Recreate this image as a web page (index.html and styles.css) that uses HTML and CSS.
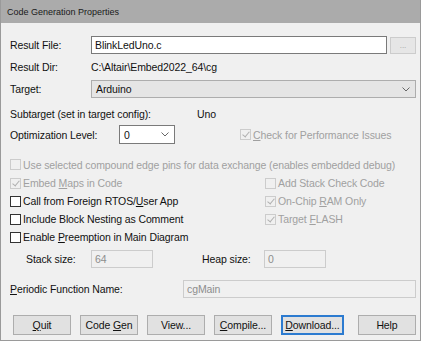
FILE: index.html
```html
<!DOCTYPE html>
<html lang="en">

<head>
    <meta charset="UTF-8">
    <title>Code Generation Properties</title>
    <link rel="stylesheet" href="styles.css">
</head>

<body>

    <div class="window">
        <div class="titlebar">Code Generation Properties</div>

        <div class="content">

            <div class="row r-file">
                <span class="label">Result File:</span>
                <div class="input file-input">BlinkLedUno.c</div>
                <div class="browse">...</div>
            </div>

            <div class="row r-dir">
                <span class="label">Result Dir:</span>
                <span>C:\Altair\Embed2022_64\cg</span>
            </div>

            <div class="row r-target">
                <span class="label">Target:</span>
                <div class="select target-select">
                    <span>Arduino</span>
                    <svg class="chev" width="8" height="5" viewBox="0 0 8 5"><path d="M0.5 0.5 L4 4 L7.5 0.5" fill="none" stroke="#666" stroke-width="1"/></svg>
                </div>
            </div>

            <div class="row r-sub">
                <span class="sub-label">Subtarget (set in target config):</span>
                <span>Uno</span>
            </div>

            <div class="row r-opt">
                <span class="opt-label">Optimization Level:</span>
                <div class="select opt-select">
                    <span>0</span>
                    <svg class="chev" width="8" height="5" viewBox="0 0 8 5"><path d="M0.5 0.5 L4 4 L7.5 0.5" fill="none" stroke="#666" stroke-width="1"/></svg>
                </div>
                <div class="check disabled perf">
                    <span class="box checked"></span><span><u>C</u>heck for Performance Issues</span>
                </div>
            </div>

            <div class="row r-first check disabled">
                <span class="box"></span><span>Use selected compound edge pins for data exchange (enables embedded debug)</span>
            </div>

            <div class="row pair">
                <div class="check disabled left"><span class="box checked"></span><span>Embed <u>M</u>aps in Code</span></div>
                <div class="check disabled"><span class="box"></span><span>Add Stack Check Code</span></div>
            </div>

            <div class="row pair">
                <div class="check left"><span class="box"></span><span>Call from Foreign RTOS/<u>U</u>ser App</span></div>
                <div class="check disabled"><span class="box checked"></span><span>On-Chip <u>R</u>AM Only</span></div>
            </div>

            <div class="row pair">
                <div class="check left"><span class="box"></span><span>Include Block Nesting as Comment</span></div>
                <div class="check disabled"><span class="box checked"></span><span>Target <u>F</u>LASH</span></div>
            </div>

            <div class="row pair">
                <div class="check left"><span class="box"></span><span>Enable <u>P</u>reemption in Main Diagram</span></div>
            </div>

            <div class="row r-stack">
                <span class="stack-label">Stack size:</span>
                <div class="input dis stack-input">64</div>
                <span class="heap-label">Heap size:</span>
                <div class="input dis stack-input">0</div>
            </div>

            <div class="row r-periodic">
                <span class="periodic-label"><u>P</u>eriodic Function Name:</span>
                <div class="input dis periodic-input">cgMain</div>
            </div>

            <div class="buttons">
                <div class="btn"><u>Q</u>uit</div>
                <div class="btn">Code <u>G</u>en</div>
                <div class="btn">View...</div>
                <div class="btn"><u>C</u>ompile...</div>
                <div class="btn focus"><u>D</u>ownload...</div>
                <div class="btn help">Help</div>
            </div>

        </div>
    </div>

</body>

</html>
```

FILE: styles.css
```css
body {
    margin: 0;
    padding: 0;
    background-color: #ffffff;
    font-family: 'Liberation Sans', Arial, sans-serif;
    font-size: 10.5px;
    letter-spacing: -0.1px;
    color: #111;
}

.window {
    width: 421px;
    height: 341px;
    background-color: #f0f0f0;
    border-left: 1px solid #9a9a9a;
    border-right: 1px solid #9a9a9a;
    border-bottom: 1px solid #9a9a9a;
    box-sizing: border-box;
}

.titlebar {
    height: 23px;
    background-color: #ababab;
    color: #1a1a1a;
    padding-left: 6px;
    line-height: 24px;
    font-size: 9px;
    letter-spacing: 0;
}

.content {
    padding: 13px 0 0 9px;
}

.row {
    display: flex;
    align-items: center;
    height: 18px;
}

u {
    text-decoration: underline;
    text-underline-offset: 1px;
}

.label {
    width: 81px;
}

/* inputs */

.input {
    height: 18px;
    box-sizing: border-box;
    border: 1px solid #7a7a7a;
    background-color: #fff;
    padding-left: 3px;
    line-height: 16px;
}

.input.dis {
    background-color: #f0f0f0;
    border-color: #cccccc;
    color: #8d8d8d;
}

.file-input {
    width: 296px;
}

.browse {
    width: 26px;
    height: 17px;
    margin-left: 3px;
    box-sizing: border-box;
    border: 1px solid #cccccc;
    background-color: #e6e6e6;
    color: #a0a0a0;
    font-size: 8px;
    text-align: center;
    line-height: 15px;
}

.r-dir {
    margin-top: 4px;
}

.r-target {
    margin-top: 4px;
}

.select {
    height: 18px;
    box-sizing: border-box;
    display: flex;
    align-items: center;
    justify-content: space-between;
    padding: 0 5px 0 4px;
}

.target-select {
    width: 325px;
    background-color: #e5e5e5;
    border: 1px solid #adadad;
}

.r-sub {
    margin-top: 7px;
}

.sub-label {
    width: 187px;
}

.r-opt {
    margin-top: 2px;
    height: 19px;
}

.opt-label {
    width: 109px;
}

.opt-select {
    width: 56px;
    height: 19px;
    background-color: #fff;
    border: 1px solid #7a7a7a;
}

.perf {
    margin-left: 65px;
}

/* checkboxes */

.check {
    display: flex;
    align-items: center;
}

.box {
    width: 11px;
    height: 11px;
    box-sizing: border-box;
    border: 1px solid #333;
    background-color: #fff;
    margin-right: 2px;
    position: relative;
}

.check.disabled {
    color: #a0a0a0;
}

.check.disabled .box {
    border-color: #cccccc;
    background-color: #f0f0f0;
}

.box.checked::after {
    content: "";
    position: absolute;
    left: 3px;
    top: 0px;
    width: 3px;
    height: 6px;
    border-right: 1.5px solid #b0b0b0;
    border-bottom: 1.5px solid #b0b0b0;
    transform: rotate(40deg);
}

.r-first {
    margin-top: 11px;
    height: 19px;
}

.pair .left {
    width: 255px;
}

.r-stack {
    margin-top: 4px;
}

.stack-label {
    margin-left: 16px;
    width: 65px;
}

.stack-input {
    width: 62px;
}

.heap-label {
    margin-left: 49px;
    width: 62px;
}

.r-periodic {
    margin-top: 12px;
}

.periodic-label {
    width: 173px;
}

.periodic-input {
    width: 233px;
}

/* buttons */

.buttons {
    display: flex;
    margin-top: 17px;
    margin-left: 3px;
    gap: 9px;
}

.btn {
    width: 58px;
    height: 20px;
    box-sizing: border-box;
    border: 1px solid #adadad;
    background-color: #e1e1e1;
    text-align: center;
    line-height: 18px;
}

.btn.focus {
    width: 63px;
    border: 2px solid #2c7bd0;
    line-height: 16px;
}

.btn.help {
    margin-left: 5px;
}
```
